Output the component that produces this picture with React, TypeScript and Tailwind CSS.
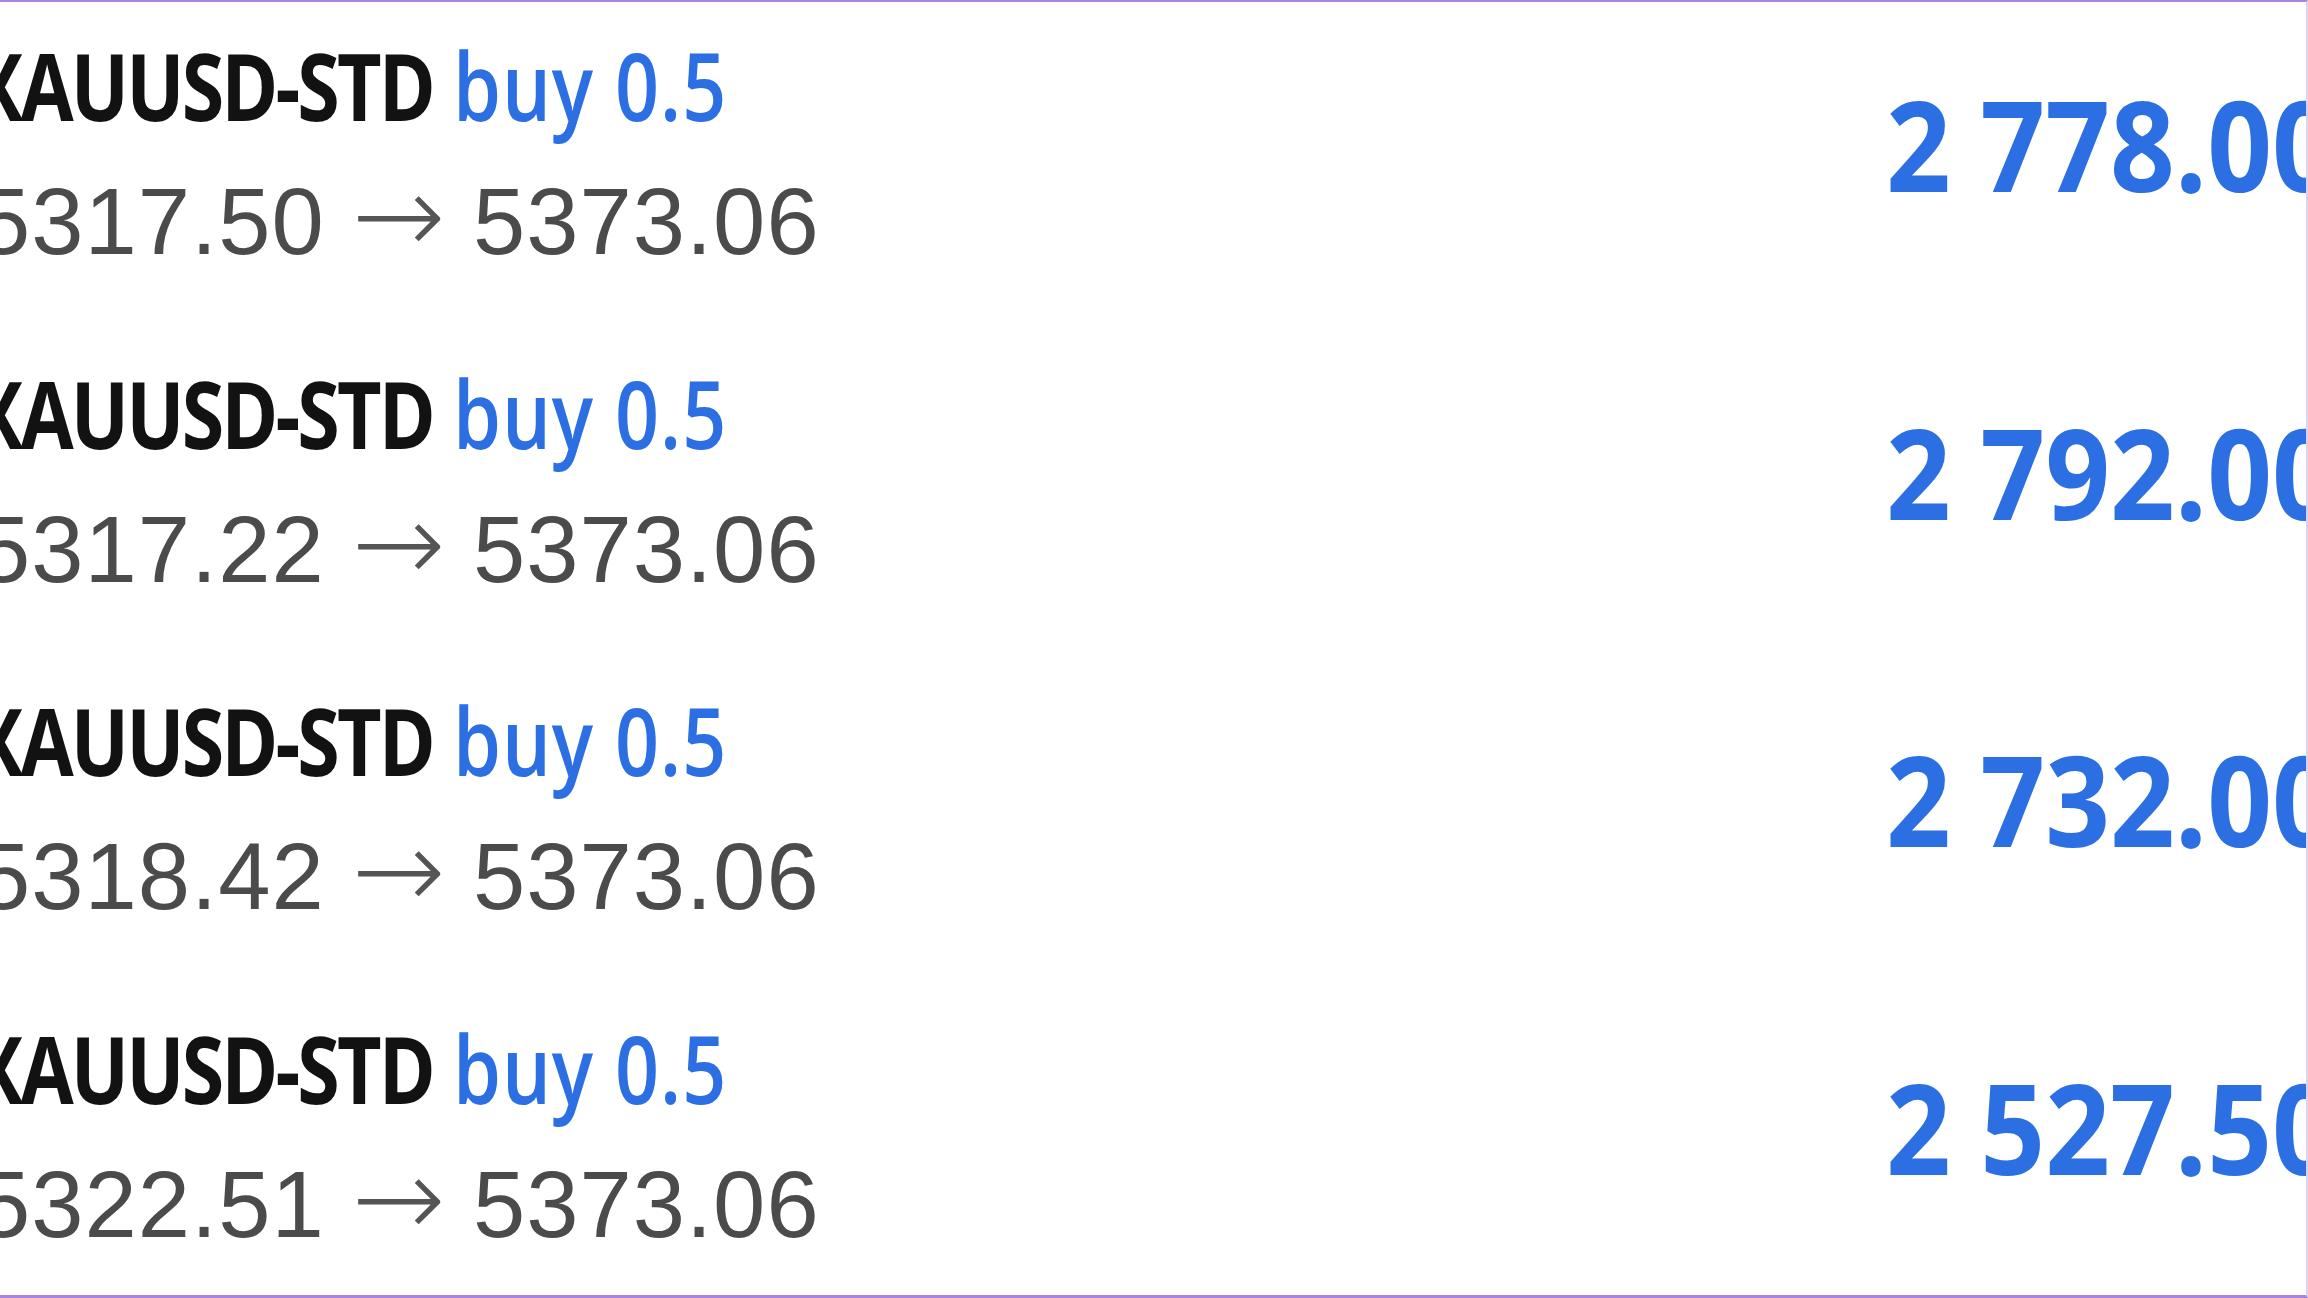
import React from 'react';

const trades = [
  { open: '5317.50', close: '5373.06', profit: '2 778.00' },
  { open: '5317.22', close: '5373.06', profit: '2 792.00' },
  { open: '5318.42', close: '5373.06', profit: '2 732.00' },
  { open: '5322.51', close: '5373.06', profit: '2 527.50' },
];

const TradeRow: React.FC<{ open: string; close: string; profit: string }> = ({ open, close, profit }) => (
  <div className="flex h-[327.6px] shrink-0">
    <div className="w-[1886px] shrink-0 pt-[36px]">
      <div className="-ml-[28px] h-[94px] whitespace-nowrap text-[94px] leading-none font-['Open_Sans',sans-serif]">
        <span className="inline-block origin-left scale-x-[0.82]">
          <span className="font-bold tracking-[-3.5px] text-[#121212]">XAUUSD-STD</span>{' '}
          <span className="font-semibold tracking-[1.2px] text-[#2c6fe3]">buy 0.5</span>
        </span>
      </div>
      <div className="mt-[43px] -ml-[22px] h-[94px] whitespace-nowrap text-[94px] leading-none tracking-[1px] text-[#4b4b4b] font-['Liberation_Sans',Arial,sans-serif]">
        {open}{' '}
        <span className="font-['DejaVu_Sans',sans-serif] font-extralight text-[112px] leading-[0] tracking-normal text-[#555555]">→</span>{' '}
        {close}
      </div>
    </div>
    <div className="pt-[78px] whitespace-nowrap text-[126px] leading-none font-bold text-[#2c6fe3] font-['Open_Sans',sans-serif]">
      <span className="inline-block origin-left scale-x-[0.9]">{profit}</span>
    </div>
  </div>
);

export default function App() {
  return (
    <div className="w-[2308px] h-[1298px] overflow-hidden bg-white border-t-2 border-b-[3px] border-[#a884e3] border-r-2 border-r-[#ddd0f5] flex flex-col">
      {trades.map((t, i) => (
        <TradeRow key={i} {...t} />
      ))}
    </div>
  );
}
